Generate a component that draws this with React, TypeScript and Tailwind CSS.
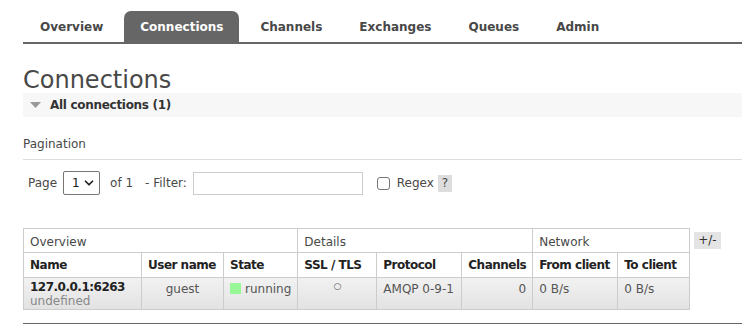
import { ChevronDown } from 'lucide-react';

const tabs = ['Overview', 'Connections', 'Channels', 'Exchanges', 'Queues', 'Admin'];

function Tabs() {
  return (
    <div className="flex items-end gap-[5px] border-b-2 border-[#666] pl-px h-[44px]">
      {tabs.map((t) =>
        t === 'Connections' ? (
          <div key={t} className="h-[31px] px-4 flex items-center rounded-t-[7px] bg-[#666] text-white font-bold">
            {t}
          </div>
        ) : (
          <div key={t} className="h-[31px] px-4 flex items-center text-[#484848] font-bold">
            {t}
          </div>
        )
      )}
    </div>
  );
}

const cell = 'border border-[#ccc] px-[6px] align-top whitespace-nowrap';
const head = cell + ' text-left align-middle tracking-[-0.5px] pt-[3px]';

export default function App() {
  return (
    <div
      className="w-[742px] h-[324px] overflow-hidden bg-white text-[12px] text-[#484848] pl-[23px]"
      style={{ fontFamily: '"DejaVu Sans", Verdana, sans-serif' }}
    >
      <Tabs />
      <h1 className="text-[24px] leading-none mt-[24px] text-[#484848]">Connections</h1>

      <div className="mt-px h-[24px] bg-[#f7f7f7] flex items-center pl-[7px]">
        <svg width="11" height="7" viewBox="0 0 11 7" className="mr-[9px]">
          <polygon points="0,0 11,0 5.5,6" fill="#999" />
        </svg>
        <span className="font-bold text-[#333] tracking-[-0.3px]">All connections (1)</span>
      </div>

      <div className="mt-[18px] pb-[6px] border-b border-[#ddd]">Pagination</div>

      <div className="mt-[11px] flex items-center pl-[5px] h-[24px]">
        <span>Page</span>
        <div className="ml-[6px] w-[37px] h-[24px] border border-[#767676] rounded-[2px] flex items-center justify-between pl-[8px] pr-[3px] text-[#222]">
          <span>1</span>
          <ChevronDown size={14} strokeWidth={3} />
        </div>
        <span className="ml-[10px]">of 1</span>
        <span className="ml-[12px]">- Filter:</span>
        <div className="ml-[6px] w-[170px] h-[23px] border border-[#ccc]" />
        <div className="ml-[14px] w-[13px] h-[13px] border border-[#767676] rounded-[3px]" />
        <span className="ml-[7px]">Regex</span>
        <span className="ml-[4px] px-[4px] bg-[#ddd] leading-[17px]">?</span>
      </div>

      <div className="mt-[33px] flex items-start gap-[4px]">
        <table className="border-collapse border border-[#ccc] table-fixed">
          <colgroup>
            <col className="w-[118px]" />
            <col className="w-[82px]" />
            <col className="w-[74px]" />
            <col className="w-[79px]" />
            <col className="w-[85px]" />
            <col className="w-[70px]" />
            <col className="w-[85px]" />
            <col className="w-[72px]" />
          </colgroup>
          <thead>
            <tr className="h-[24px]">
              <th colSpan={3} className={cell + ' text-left font-normal align-middle pt-[4px]'}>Overview</th>
              <th colSpan={3} className={cell + ' text-left font-normal align-middle pt-[4px]'}>Details</th>
              <th colSpan={2} className={cell + ' text-left font-normal align-middle pt-[4px]'}>Network</th>
            </tr>
            <tr className="h-[25px] text-[#222]">
              <th className={head}>Name</th>
              <th className={head}>User name</th>
              <th className={head}>State</th>
              <th className={head}>SSL / TLS</th>
              <th className={head}>Protocol</th>
              <th className={head}>Channels</th>
              <th className={head}>From client</th>
              <th className={head}>To client</th>
            </tr>
          </thead>
          <tbody>
            <tr className="h-[32px] bg-gradient-to-b from-[#f2f2f2] to-[#e2e2e2] text-[#555]">
              <td className={cell + ' pt-[2px] leading-[14px]'}>
                <div className="font-bold text-[#222] tracking-[-0.5px]">127.0.0.1:6263</div>
                <div className="text-[#888]">undefined</div>
              </td>
              <td className={cell + ' pt-[2px] text-center'}>guest</td>
              <td className={cell + ' pt-[2px]'}>
                <span className="inline-block w-[11px] h-[11px] bg-[#98f898] mr-[4px] align-[-1px]" />
                running
              </td>
              <td className={cell + ' pt-[2px] text-center text-[9px]'}>○</td>
              <td className={cell + ' pt-[2px]'}>AMQP 0-9-1</td>
              <td className={cell + ' pt-[2px] text-right'}>0</td>
              <td className={cell + ' pt-[2px]'}>0 B/s</td>
              <td className={cell + ' pt-[2px]'}>0 B/s</td>
            </tr>
          </tbody>
        </table>
        <span className="mt-[4px] px-[4px] bg-[#e4e4e4] leading-[17px] text-[#333]">+/-</span>
      </div>

      <div className="mt-[13px] border-b-2 border-[#666]" />
    </div>
  );
}
